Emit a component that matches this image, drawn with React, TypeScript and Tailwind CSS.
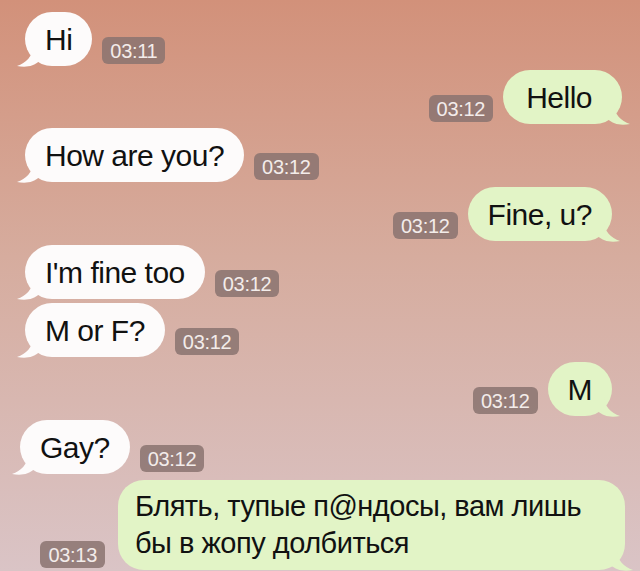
import React from 'react'

interface Msg {
  text: string
  time: string
  out?: boolean
  row: string
  bubble: string
}

const messages: Msg[] = [
  { text: 'Hi', time: '03:11', row: 'mt-[12px] pl-[25px]', bubble: 'px-[20px]' },
  { text: 'Hello', time: '03:12', out: true, row: 'mt-[4px] pr-[18px]', bubble: 'pl-[23px] pr-[30px]' },
  { text: 'How are you?', time: '03:12', row: 'mt-[4px] pl-[25px]', bubble: 'px-[20px]' },
  { text: 'Fine, u?', time: '03:12', out: true, row: 'mt-[5px] pr-[28px]', bubble: 'px-[20px]' },
  { text: "I'm fine too", time: '03:12', row: 'mt-[4px] pl-[25px]', bubble: 'px-[20px]' },
  { text: 'M or F?', time: '03:12', row: 'mt-[4px] pl-[25px]', bubble: 'px-[20px]' },
  { text: 'M', time: '03:12', out: true, row: 'mt-[5px] pr-[28px]', bubble: 'px-[20px]' },
  { text: 'Gay?', time: '03:12', row: 'mt-[4px] pl-[20px]', bubble: 'px-[20px]' },
]

function Tail({ out }: { out?: boolean }) {
  if (out) {
    return (
      <svg
        className="absolute right-[-8px] bottom-[-2px]"
        width="22"
        height="22"
        viewBox="0 0 22 22"
      >
        <path d="M6 0 C6 10 13 17 22 20 C13 21.5 5 20.5 0 15 L0 0 Z" fill="#e2f4c6" />
      </svg>
    )
  }
  return (
    <svg
      className="absolute left-[-8px] bottom-[-2px]"
      width="22"
      height="22"
      viewBox="0 0 22 22"
    >
      <path d="M16 0 C16 10 9 17 0 20 C9 21.5 17 20.5 22 15 L22 0 Z" fill="#fdfbfb" />
    </svg>
  )
}

function Time({ t }: { t: string }) {
  return (
    <span className="mb-[2px] rounded-[6px] bg-[#897370]/85 px-[8px] h-[27px] flex items-center text-[20px] tracking-[-0.3px] text-[#f3ecea]">
      {t}
    </span>
  )
}

export default function App() {
  return (
    <div
      className="w-[640px] h-[571px] overflow-hidden bg-linear-to-b from-[#d2917a] via-[#d6ac9e] via-45% to-[#dac4c6] text-[#111]"
      style={{ fontFamily: '"Liberation Sans", Arial, sans-serif' }}
    >
      {messages.map((m, i) => (
        <div
          key={i}
          className={`flex items-end gap-[10px] ${m.out ? 'justify-end' : 'justify-start'} ${m.row}`}
        >
          {m.out && <Time t={m.time} />}
          <div
            className={`relative h-[54px] flex items-center rounded-[27px] text-[30px] tracking-[-0.5px] ${m.bubble} ${
              m.out ? 'bg-[#e2f4c6]' : 'bg-[#fdfbfb]'
            }`}
          >
            <Tail out={m.out} />
            <span className="relative">{m.text}</span>
          </div>
          {!m.out && <Time t={m.time} />}
        </div>
      ))}

      <div className="mt-[6px] flex items-end justify-end gap-[13px] pr-[15px]">
        <Time t="03:13" />
        <div className="relative w-[507px] rounded-[26px] bg-[#e2f4c6] pl-[17px] pr-[14px] pt-[8px] pb-[8px] text-[29px] tracking-[-0.5px] leading-[37px]">
          <Tail out />
          <span className="relative">
            Блять, тупые п@ндосы, вам лишь
            <br />
            бы в жопу долбиться
          </span>
        </div>
      </div>
    </div>
  )
}
